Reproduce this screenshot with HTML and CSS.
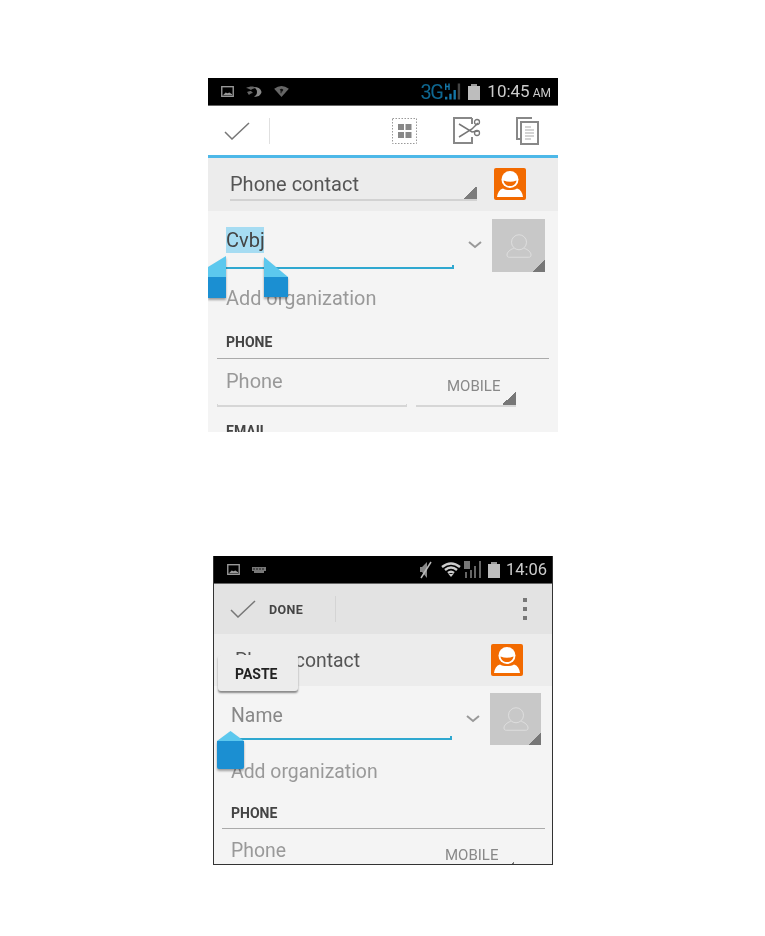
FILE: index.html
```html
<!DOCTYPE html>
<html lang="en">
<head>
<meta charset="utf-8">
<title>Contact edit screens</title>
<link rel="stylesheet" href="styles.css">
</head>
<body>
<svg class="defs" width="0" height="0" aria-hidden="true">
  <symbol id="person" viewBox="0 0 32 32">
    <circle cx="16" cy="11.500" r="8.500" fill="#fff"/>
    <path d="M9 20.500c1.500 1 4 1.500 7 1.500s5.500-.5 7-1.500c3.500 1 5.500 4 6 8.500H3c.5-4.500 2.500-7.500 6-8.500z" fill="#fff"/>
    <path d="M9.500 12.500q6.500 2.500 13 0c-.5 3.500-3 5.500-6.500 5.500s-6-2-6.500-5.500z" fill="#f26a00"/>
  </symbol>
  <symbol id="ghost" viewBox="0 0 40 40">
    <circle cx="20" cy="15" r="10" fill="none" stroke="#dedede" stroke-width="1.300"/>
    <path d="M13 23c-5 2-9 5-9 9 0 2 1 3 3 3h26c2 0 3-1 3-3 0-4-4-7-9-9" fill="none" stroke="#dedede" stroke-width="1.300"/>
  </symbol>
  <symbol id="check" viewBox="0 0 26 18">
    <path d="M1 10l7 7L25 1" fill="none" stroke="#777" stroke-width="1.500"/>
  </symbol>
  <symbol id="chev" viewBox="0 0 14 8">
    <path d="M1 1l6 5 6-5" fill="none" stroke="#999" stroke-width="2"/>
  </symbol>
  <symbol id="pic" viewBox="0 0 14 12">
    <rect x=".75" y=".75" width="12.500" height="10.500" fill="none" stroke="#999" stroke-width="1.500"/>
    <path d="M2 10l3-3 2 1 2-1 3 2v1z" fill="#999"/>
  </symbol>
</svg>

<main class="page">
  <section class="shot shot-a">
    <header class="status">
      <div class="status-left">
        <svg class="ic-pic"><use href="#pic"/></svg>
        <svg class="ic-sprint" viewBox="0 0 16 12"><path d="M0 2c4-2 8-2 10 0-2 0-4 1-5 2-2-1-3-2-5-2zM1 6c2-1 3-1 4-1l2 2c-2 0-3 1-4 2-1-1-1-2-2-3z" fill="#666"/><path d="M8 1.500c4-1 7 1.500 7.500 4.500-.5 3-3.500 5.500-7.500 4.500 2-1 3-2.500 3-4.500s-1-3.500-3-4.500z" fill="#888"/></svg>
        <svg class="ic-wifi" viewBox="0 0 16 12"><path d="M8 12L0 3q8-6 16 0z" fill="#666"/><path d="M6 4q2-2 4 0l-1 2H8v2H7V5z" fill="#111"/></svg>
      </div>
      <div class="status-right">
        <span class="net">3G</span>
        <svg class="ic-signal" viewBox="0 0 18 17">
          <path d="M0 0h1.500v2.500h2V0H5v7H3.500V4h-2v3H0z" fill="#1577a8"/>
          <path d="M0 14h2.500v3H0zM4.500 11H7v6H4.500zM9 7h2.500v10H9z" fill="#1577a8"/>
          <path d="M13.500 0H16v17h-2.500z" fill="#444"/>
        </svg>
        <span class="battery"></span>
        <span class="clock">10:45<small class="ampm">AM</small></span>
      </div>
    </header>
    <nav class="bar bar-a">
      <svg class="ic-check"><use href="#check"/></svg>
      <span class="sep"></span>
      <div class="bar-tools">
        <svg class="tool-grid" viewBox="0 0 25 26">
          <rect x=".5" y=".5" width="24" height="25" fill="none" stroke="#999" stroke-dasharray="1.500 1.500"/>
          <path d="M6 6h6v6H6zM13.500 6h6v6h-6zM6 14h6v6H6zM13.500 14h6v6h-6z" fill="#888"/>
        </svg>
        <svg class="tool-cut" viewBox="0 0 28 27">
          <path d="M19 1H1v25h18v-6M19 1v6" fill="none" stroke="#888" stroke-width="2"/>
          <path d="M6 7l13 8 6-1M6 20l13-8 6-6" fill="none" stroke="#777" stroke-width="1.500"/>
          <circle cx="24" cy="5" r="2.500" fill="none" stroke="#777" stroke-width="1.300"/>
          <circle cx="24" cy="16" r="2.500" fill="none" stroke="#777" stroke-width="1.300"/>
        </svg>
        <svg class="tool-copy" viewBox="0 0 23 28">
          <path d="M16 1H1v21h4" fill="none" stroke="#888" stroke-width="2"/>
          <rect x="5" y="5" width="17" height="22" fill="#fff" stroke="#888" stroke-width="2"/>
          <path d="M9 10h6M9 13h9M9 16h9M9 19h9M9 22h6" stroke="#aaa" stroke-width="1.200"/>
        </svg>
      </div>
    </nav>
    <div class="account">
      <div class="account-select"><span>Phone contact</span></div>
      <span class="badge"><svg class="badge-art"><use href="#person"/></svg></span>
    </div>
    <div class="form">
      <div class="name-row">
        <div class="name-field">
          <div class="name-text"><span class="selected">Cvbj</span></div>
          <div class="ticked"></div>
        </div>
        <svg class="ic-chev"><use href="#chev"/></svg>
        <span class="avatar"><svg class="avatar-art"><use href="#ghost"/></svg></span>
      </div>
      <div class="org">Add organization</div>
      <div class="section-title">PHONE</div>
      <div class="phone-row">
        <div class="phone-field">
          <div class="hint">Phone</div>
          <div class="both-ticks"></div>
        </div>
        <div class="type-field">MOBILE</div>
      </div>
      <div class="section-title section-email">EMAIL</div>
    </div>
    <svg class="handle handle-left" viewBox="0 0 18 42"><path d="M18 0v21H0V11z" fill="#5cc8ee"/><path d="M0 21h18v21H0z" fill="#1b8fd2"/></svg>
    <svg class="handle handle-right" viewBox="0 0 24 40"><path d="M0 0l24 20H0z" fill="#5cc8ee"/><path d="M0 20h24v20H0z" fill="#1b8fd2"/></svg>
  </section>

  <section class="shot shot-b">
    <header class="status">
      <div class="status-left">
        <svg class="ic-pic"><use href="#pic"/></svg>
        <svg class="ic-keys" viewBox="0 0 14 6"><path d="M0 0h14v4h-2v2H2V4H0z" fill="#777"/><path d="M2 1v2M5 1v2M8 1v2M11 1v2" stroke="#222"/></svg>
      </div>
      <div class="status-right">
        <svg class="ic-mute" viewBox="0 0 14 18"><path d="M8 1L3 6H1v5h2l5 6z" fill="#888"/><path d="M12 1L2 17" stroke="#bbb" stroke-width="1.500"/></svg>
        <svg class="ic-wifi2" viewBox="0 0 20 15"><path d="M1 5q9-7 18 0M4 8q6-5 12 0M7 11q3-2.500 6 0" fill="none" stroke="#ccc" stroke-width="2.400"/><path d="M10 15l-2.500-3h5z" fill="#ccc"/></svg>
        <svg class="ic-signal2" viewBox="0 0 20 17">
          <path d="M0 0h6v8H0z" fill="#777"/>
          <path d="M1 11h2v6H1zM6 9h2v8H6zM10 5h2v12h-2zM15 0h2v17h-2z" fill="#666"/>
        </svg>
        <span class="battery"></span>
        <span class="clock">14:06</span>
      </div>
    </header>
    <nav class="bar bar-b">
      <svg class="ic-check"><use href="#check"/></svg>
      <span class="done">DONE</span>
      <span class="sep"></span>
      <div class="dots"><i></i><i></i><i></i></div>
    </nav>
    <div class="account">
      <div class="account-plain">Phone contact</div>
      <span class="badge"><svg class="badge-art"><use href="#person"/></svg></span>
    </div>
    <div class="form">
      <div class="name-row">
        <div class="name-field">
          <div class="name-text name-hint">Name</div>
          <div class="ticked"></div>
        </div>
        <svg class="ic-chev"><use href="#chev"/></svg>
        <span class="avatar"><svg class="avatar-art"><use href="#ghost"/></svg></span>
      </div>
      <div class="org">Add organization</div>
      <div class="section-title">PHONE</div>
      <div class="phone-row">
        <div class="phone-field">
          <div class="hint">Phone</div>
        </div>
        <div class="type-field">MOBILE</div>
      </div>
    </div>
    <div class="paste">PASTE</div>
    <svg class="handle handle-mid" viewBox="0 0 27 38"><path d="M13.500 0L27 10v3H0v-3z" fill="#5cc8ee"/><path d="M0 10h27v26q0 2-2 2H2q-2 0-2-2z" fill="#1b8fd2"/></svg>
  </section>
</main>
</body>
</html>
```

FILE: styles.css
```css
* { box-sizing: border-box; }

html, body { margin: 0; padding: 0; background: #fff; }

body {
  font-family: Roboto, "Liberation Sans", sans-serif;
  overflow: hidden;
}

.defs { position: absolute; }

.page {
  display: flex;
  flex-direction: column;
  padding-top: 78px;
}

.shot {
  position: relative;
  overflow: hidden;
  background: #f4f4f4;
  filter: blur(.45px);
}

.shot-a { width: 350px; height: 354px; margin-left: 208px; }

.shot-b {
  width: 340px;
  height: 309px;
  margin-left: 213px;
  margin-top: 124px;
  border: solid #333;
  border-width: 0 1px 1px;
}

/* status bar */
.status {
  display: flex;
  align-items: center;
  justify-content: space-between;
  height: 28px;
  background: #000;
  border-bottom: 1px solid #666;
}

.status-left, .status-right { display: flex; align-items: center; }

.shot-a .status-left { padding-left: 13px; gap: 12px; }
.shot-a .status-right { padding-right: 7px; }
.shot-b .status-left { padding-left: 13px; gap: 12px; }
.shot-b .status-right { padding-right: 5px; }

.ic-pic { width: 13px; height: 11px; }
.ic-sprint { width: 16px; height: 12px; }
.ic-wifi { width: 15px; height: 11px; }
.ic-keys { width: 14px; height: 6px; }

.net {
  color: #0e6790;
  font-size: 20px;
  letter-spacing: -1.500px;
  line-height: 24px;
}

.ic-signal { width: 17px; height: 17px; margin-left: 3px; }

.battery {
  position: relative;
  display: block;
  width: 12px;
  height: 14px;
  margin-top: 2px;
  background: #bdbdbd;
}

.battery::before {
  content: "";
  position: absolute;
  left: 3px;
  top: -2px;
  width: 6px;
  height: 2px;
  background: #999;
}

.shot-a .battery { margin-left: 6px; }
.shot-b .battery { margin-left: 4px; }

.clock {
  color: #ccc;
  font-size: 17px;
  line-height: 24px;
  margin-left: 7px;
}

.shot-b .clock { font-size: 16.500px; margin-left: 6px; }

.ampm { font-size: 12px; margin-left: 3px; }

.ic-mute { width: 14px; height: 18px; }
.ic-wifi2 { width: 20px; height: 15px; margin-left: 8px; }
.ic-signal2 { width: 20px; height: 17px; margin-left: 3px; }

/* action bar */
.bar { display: flex; align-items: center; }

.bar-a {
  height: 52px;
  background: #fff;
  border-bottom: 3px solid #4db8e8;
  padding: 0 19px 0 16px;
}

.bar-b {
  height: 50px;
  background: #e3e3e3;
  padding: 0 25px 0 16px;
}

.ic-check { width: 26px; height: 18px; flex: none; }

.sep { width: 1px; height: 26px; background: #e0e0e0; flex: none; }
.bar-a .sep { margin-left: 19px; }
.bar-b .sep { margin-left: 32px; background: #d4d4d4; }

.bar-tools {
  display: flex;
  align-items: center;
  margin-left: auto;
}

.tool-grid { width: 25px; height: 26px; }
.tool-cut { width: 28px; height: 27px; margin-left: 36px; }
.tool-copy { width: 23px; height: 28px; margin-left: 35px; }

.done {
  font-size: 12.500px;
  font-weight: 700;
  letter-spacing: .4px;
  color: #444;
  margin-left: 13px;
}

.dots {
  display: flex;
  flex-direction: column;
  gap: 5px;
  margin-left: auto;
}

.dots i { display: block; width: 4px; height: 4px; background: #777; }

/* account row */
.account {
  display: flex;
  align-items: flex-start;
  height: 53px;
  background: #ececec;
}

.shot-b .account { height: 52px; }

.account-select {
  width: 247px;
  height: 43px;
  margin: 0 0 0 22px;
  padding-top: 14px;
  font-size: 20px;
  line-height: 24px;
  color: #555;
  border-bottom: 2px solid #d2d2d2;
  background: linear-gradient(135deg, transparent 50%, #7c7c7c 50%) right bottom / 13px 13px no-repeat;
}

.account-plain {
  width: 254px;
  margin-left: 21px;
  padding-top: 15px;
  font-size: 19.400px;
  line-height: 24px;
  color: #555;
}

.badge {
  display: block;
  width: 32px;
  height: 32px;
  border-radius: 2px;
  background: #f26a00;
}

.shot-a .badge { margin: 10px 0 0 17px; }
.shot-b .badge { margin: 10px 0 0 2px; }

.badge-art { display: block; width: 32px; height: 32px; }

/* form */
.form { padding-left: 9px; }
.shot-b .form { padding-left: 8px; }

.name-row { display: flex; align-items: flex-start; padding-top: 8px; }
.shot-b .name-row { padding-top: 7px; }

.name-field { width: 237px; }
.shot-b .name-field { width: 230px; }

.name-text {
  height: 46px;
  padding: 8px 0 0 9px;
  font-size: 20px;
  line-height: 26px;
  color: #444;
}

.shot-b .name-text { height: 43px; padding-top: 10px; font-size: 19.400px; }

.name-hint { color: #888; }

.selected {
  display: inline-block;
  width: 38px;
  height: 26px;
  background: #a6dcf2;
}

.ticked {
  height: 4px;
  border: solid #2fa8d0;
  border-width: 0 2px 2px 0;
}

.ic-chev { width: 14px; height: 8px; margin: 22px 0 0 14px; flex: none; }

.avatar {
  display: flex;
  align-items: center;
  justify-content: center;
  width: 53px;
  height: 53px;
  margin-left: 10px;
  background: #c8c8c8 linear-gradient(135deg, transparent 50%, #777 50%) right bottom / 13px 13px no-repeat;
}

.shot-b .avatar { width: 51px; height: 52px; margin-left: 10px; }

.avatar-art { width: 30px; height: 30px; }

.org {
  margin-top: 14px;
  padding-left: 9px;
  font-size: 19.900px;
  line-height: 26px;
  color: #999;
}

.shot-b .org { font-size: 19.400px; }

.section-title {
  width: 332px;
  margin-top: 21px;
  padding: 0 0 7px 9px;
  font-size: 14px;
  font-weight: 700;
  line-height: 18px;
  color: #444;
  border-bottom: 1px solid #aaa;
}

.shot-b .section-title { width: 323px; margin-top: 19px; padding-bottom: 6px; }

.section-email {
  border: 0;
  margin-top: 15px;
  padding-bottom: 0;
}

.phone-row { display: flex; align-items: flex-start; padding-top: 9px; }

.phone-field { width: 190px; }
.shot-b .phone-field { width: 192px; }

.hint {
  height: 36px;
  padding-left: 9px;
  font-size: 20px;
  line-height: 26px;
  color: #999;
}

.shot-b .hint { font-size: 19.400px; }

.both-ticks {
  height: 3px;
  border: solid #d6d6d6;
  border-width: 0 1px 2px;
}

.type-field {
  width: 100px;
  height: 39px;
  margin-left: 9px;
  padding: 9px 0 0 31px;
  font-size: 15px;
  line-height: 18px;
  color: #888;
  border-bottom: 2px solid #d6d6d6;
  background: linear-gradient(135deg, transparent 50%, #777 50%) right bottom / 14px 14px no-repeat;
}

.shot-b .type-field {
  margin-left: 0;
  margin-top: -1px;
  border-bottom: 0;
}

/* overlays */
.paste {
  position: absolute;
  left: 4px;
  top: 99px;
  width: 80px;
  height: 36px;
  padding-left: 17px;
  font-size: 14px;
  font-weight: 700;
  line-height: 38px;
  color: #222;
  background: #ececec;
  border-radius: 3px;
  box-shadow: 0 2px 2px #888;
}

.handle {
  position: absolute;
  filter: drop-shadow(0 2px 1px rgba(0, 0, 0, .35));
}

.handle-left { left: 0; top: 178px; width: 18px; height: 42px; }
.handle-right { left: 56px; top: 179px; width: 24px; height: 40px; }
.handle-mid { left: 3px; top: 175px; width: 27px; height: 38px; }
```
